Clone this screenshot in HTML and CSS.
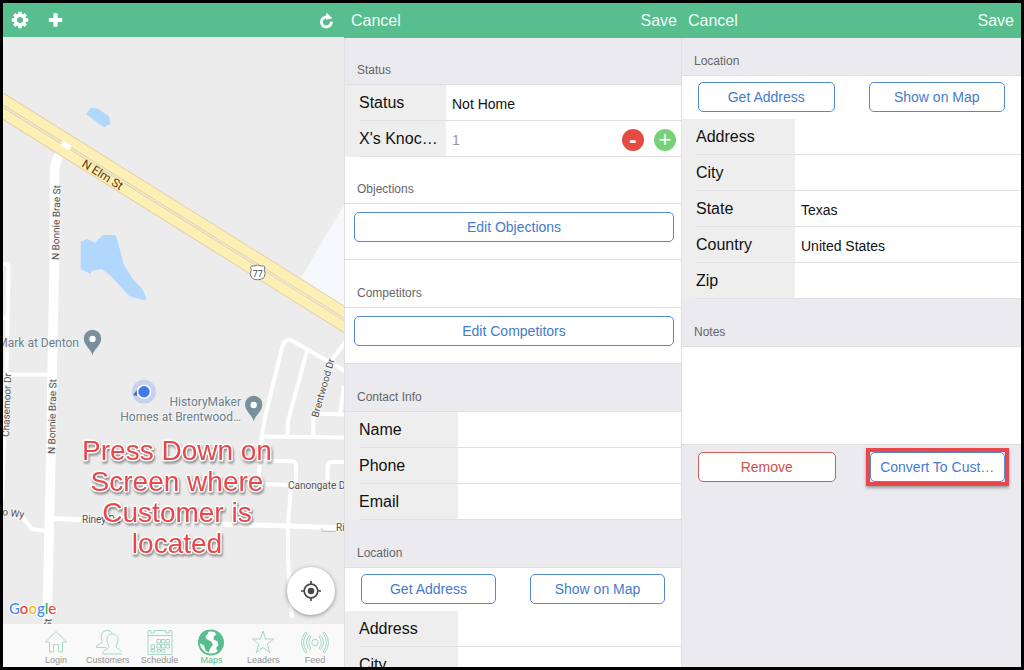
FILE: index.html
```html
<!DOCTYPE html>
<html lang="en">
<head>
<meta charset="utf-8">
<title>Customer Map</title>
<link rel="stylesheet" href="styles.css">
</head>
<body>
<main class="board">
  <section class="screen">
    <header class="bar bar-map">
      <button class="icon-btn" aria-label="Settings">
        <svg width="18" height="18" viewBox="0 0 18 18"><g fill="#fff"><path d="M7.300 .8h3.400v3.400H7.300zM7.300 13.800h3.400v3.400H7.300zM.8 7.300h3.400v3.400H.8zM13.800 7.300h3.400v3.400h-3.400z"/><path d="M7.300 .8h3.400v3.400H7.300zM7.300 13.800h3.400v3.400H7.300zM.8 7.300h3.400v3.400H.8zM13.800 7.300h3.400v3.400h-3.400z" transform="rotate(45 9 9)"/></g><circle cx="9" cy="9" r="4.700" fill="none" stroke="#fff" stroke-width="3.400"/></svg>
      </button>
      <button class="icon-btn" aria-label="Add">
        <svg width="18" height="18" viewBox="0 0 18 18"><path d="M9.500 2.300v13.400M2.800 9h13.400" stroke="#fff" stroke-width="4.200"/></svg>
      </button>
      <button class="icon-btn push" aria-label="Refresh">
        <svg width="18" height="18" viewBox="0 0 18 18"><path d="M10 6A5 5 0 1 0 14.400 10.600" fill="none" stroke="#fff" stroke-width="2.900"/><path d="M9.500 1.500l5.800 5.700-6.300 1.500z" fill="#fff"/></svg>
      </button>
    </header>
    <div class="map">
      <svg class="map-art" viewBox="3 37 341 587" preserveAspectRatio="xMidYMid slice" role="img" aria-label="Map">
        <path d="M345 203L301 278l44 30z" fill="#f6f8fb"/>
        <g fill="#b1d7fc">
          <path d="M86 114l5-6.500 6 .8 12 8 1 7.700-6 3.300z"/>
          <path d="M80.700 241.700l6.600-2.700 7.700 3.700 7.700-7.700H115l2.300 5 6.700 25 9.300 15 8.400 8 4.300 8.700-.7 4-16-4.700L110 275l-8.300-5.700-10 1.400-1 3.300-10-4.700z"/>
        </g>
        <g fill="none" stroke="#fff" stroke-linejoin="round">
          <g stroke-width="4">
            <path d="M2 264h4q2.500 0 2.500 4L6.500 374l-2 62L2 500M2 318h5M7 374.500h44"/>
            <path d="M21 515l10.700 14 17 2.500"/>
            <path d="M258.500 486v-6l3.200-43 3.300-20 17.500-71q2-7 8.500-6l54 31"/>
            <path d="M307 351l-19 70-.7 15M346 341l-14 19M313.300 413v24M313.300 413.500l32 1M340 413l4-27"/>
            <path d="M262 436.500l83 1M261 460.500l31 .8q4 0 4 4V484M345 462h-13q-4.500 0-4.500 5v17M257 484l36 1"/>
            <path d="M291 485l-3 41v35l4 57"/>
          </g>
          <path d="M53 518.500l77 3.500 160 4 56 2" stroke-width="5"/>
          <path d="M60.500 153q-6 8-6 21l-.2 90L52 380l-1 70-4 176" stroke-width="9.500"/>
        </g>
        <path d="M322 528v3.500h14" fill="none" stroke="#b8cfb8"/>
        <path d="M-2 103l352 220" stroke="#e5d0a5" stroke-width="23.500"/>
        <path d="M-2 103l352 220" stroke="#fdf0b4" stroke-width="21.500"/>
        <path d="M-2 103l352 220" stroke="#dfcda6" stroke-width="3"/>
        <path d="M-2 103l352 220" stroke="#f1e9d7" stroke-width="1.500"/>
        <path d="M62 143l8.500 5" stroke="#fff" stroke-width="5"/>
        <path d="M250.500 267q1-1.500 3.500-1l3.500-1 4 1q2.500-.5 3.500 1l-.8 3 1 3.500-1.200 4q-2 2-6.500 2.300-4.500-.3-6-2.300l-1.300-4 1.200-3.500z" fill="#fff" stroke="#777"/>
        <text class="shield" x="257.800" y="277">77</text>
        <g class="street">
          <text class="elm" transform="translate(81 166) rotate(32)">N Elm St</text>
          <text transform="translate(59 260) rotate(-89)">N Bonnie Brae St</text>
          <text transform="translate(55 454) rotate(-89)">N Bonnie Brae St</text>
          <text transform="translate(9 437) rotate(-88)">Chasemoor Dr</text>
          <text transform="translate(318 418) rotate(-74)">Brentwood Dr</text>
          <text x="288" y="489">Canongate Dr</text>
          <text x="82" y="523">Riney Rd</text>
          <text x="336" y="531">Riney Rd</text>
          <text transform="translate(2 515) rotate(8)">o Wy</text>
          <text transform="translate(51 628) rotate(-88)">St</text>
        </g>
        <g class="place">
          <text x="79" y="347" text-anchor="end">Mark at Denton</text>
          <text x="241" y="406" text-anchor="end">HistoryMaker</text>
          <text x="241" y="421" text-anchor="end">Homes at Brentwood…</text>
        </g>
        <g fill="#78909c">
          <path d="M92.500 355.500c-1-6-8.700-10-8.700-17a8.700 8.700 0 0 1 17.400 0c0 7-7.700 11-8.700 17z"/>
          <path d="M253.700 421.500c-1-6-8.700-10-8.700-17a8.700 8.700 0 0 1 17.400 0c0 7-7.700 11-8.700 17z"/>
        </g>
        <g fill="#fff"><circle cx="92.500" cy="339" r="3.200"/><circle cx="253.700" cy="405" r="3.200"/></g>
        <circle cx="144" cy="391.700" r="12" fill="#c6d1ee"/>
        <path d="M137 390l-4 5 4 1z" fill="#4a6fb8"/>
        <circle cx="144" cy="391.700" r="7.200" fill="#fff"/>
        <circle cx="144" cy="391.700" r="5.700" fill="#4479e4"/>
        <text class="google" x="9" y="614"><tspan fill="#4285f4">G</tspan><tspan fill="#ea4335">o</tspan><tspan fill="#fbbc05">o</tspan><tspan fill="#4285f4">g</tspan><tspan fill="#34a853">l</tspan><tspan fill="#ea4335">e</tspan></text>
        <g class="callout">
          <text x="177" y="460">Press Down on</text>
          <text x="177" y="491">Screen where</text>
          <text x="177" y="522">Customer is</text>
          <text x="177" y="553">located</text>
        </g>
      </svg>
      <button class="locate" aria-label="My location">
        <svg width="20" height="20" viewBox="0 0 20 20"><g fill="none" stroke="#4a4a4a" stroke-width="1.700"><circle cx="10" cy="10" r="6.800"/><path d="M10 0v3.500M10 16.500V20M0 10h3.500M16.500 10H20"/></g><circle cx="10" cy="10" r="3.300" fill="#4a4a4a"/></svg>
      </button>
    </div>
    <nav class="tabs">
      <a class="tab" href="#login"><svg width="28" height="28" viewBox="0 0 28 28"><path d="M14 3.500L24.500 14H20.500v10h-4v-7.500h-5V24h-4V14h-4z"/></svg>Login</a>
      <a class="tab" href="#customers"><svg width="28" height="28" viewBox="0 0 28 28"><path d="M12 19.500H2.500c0-4 5-3 6-6C6.500 11 6 3 13 2.500c3 0 4.500 1.500 5 3"/><path d="M18.500 6c-5 0-6.500 4-5 9 .5 1.300 1.500 2.500 1.500 3.500 0 3-6 2.500-6.500 7.500h20c0-5-6-4.500-6.500-7.500 0-1 1-2 1.500-3.500 1.500-5 0-9-5-9z"/></svg>Customers</a>
      <a class="tab" href="#schedule"><svg width="28" height="28" viewBox="0 0 28 28"><path d="M2 2.500h3V5h3V2.500h12V5h3V2.500h3v24H2zM2 7.500h24"/><path d="M11 11.500h3.500V15H11zM15.500 11.500H19V15h-3.500zM20 11.500h3.500V15H20zM5 17h3.500v3.500H5zM11 16.500h3.500V20H11zM15.500 16.500H19V20h-3.500zM20 16.500h3.500V20H20zM5 21.500h3.500V24H5zM11 21.500h3.500V24H11zM15.500 21.500H19V24h-3.500z"/></svg>Schedule</a>
      <a class="tab tab-on" href="#maps" aria-current="page"><svg width="28" height="28" viewBox="0 0 28 28"><circle class="sea" cx="14" cy="14.500" r="12"/><path class="land" d="M2 10c1-4 4-7 8-8l1.500 3-3 3.500 1 2.500 4.500 2.500 2 3-2.500 3.500-2 4.500-3-2-1.500-5L2.500 15z"/><path class="land" d="M16 2.500c6 1 10 6 10 11.500 0 4-2 7.500-5 9.500l-2-3.500 2.500-3-1-3.500-4-2 .5-3.500 2.500-1.500z"/></svg>Maps</a>
      <a class="tab" href="#leaders"><svg width="28" height="28" viewBox="0 0 28 28"><path d="M14 3l2.700 8h8l-6.400 5 2.400 8.500L14 19.500l-6.700 5L9.700 16l-6.400-5h8z"/></svg>Leaders</a>
      <a class="tab" href="#feed"><svg width="28" height="28" viewBox="0 0 28 28"><circle cx="14" cy="14.500" r="3.200"/><path d="M8.500 7.500q-6 7 0 14l1.500-1q-4.500-6 0-12zM19.500 7.500q6 7 0 14l-1.500-1q4.500-6 0-12zM4.500 4q-8 10.500 0 21l1.500-1q-7-9.500 0-19zM23.500 4q8 10.500 0 21l-1.500-1q7-9.500 0-19z"/></svg>Feed</a>
    </nav>
  </section>

  <section class="screen">
    <header class="bar"><button class="text-btn">Cancel</button><button class="text-btn">Save</button></header>
    <form class="form">
      <h2 class="head head-tight">Status</h2>
      <div class="card">
        <div class="row"><label class="name name-short" for="status">Status</label><input class="value" id="status" value="Not Home"></div>
        <div class="row"><label class="name name-short" for="knocks">X's Knoc…</label><div class="stepper"><input class="count" id="knocks" placeholder="1"><button type="button" class="step step-less" aria-label="Decrease">-</button><button type="button" class="step step-more" aria-label="Increase">+</button></div></div>
      </div>
      <h2 class="head head-tight head-white">Objections</h2>
      <div class="card card-action"><button type="button" class="btn">Edit Objections</button></div>
      <h2 class="head head-white">Competitors</h2>
      <div class="card card-action"><button type="button" class="btn">Edit Competitors</button></div>
      <h2 class="head">Contact Info</h2>
      <div class="card">
        <div class="row"><label class="name" for="name">Name</label><input class="value" id="name"></div>
        <div class="row"><label class="name" for="phone">Phone</label><input class="value" id="phone"></div>
        <div class="row"><label class="name" for="email">Email</label><input class="value" id="email"></div>
      </div>
      <h2 class="head">Location</h2>
      <div class="card">
        <div class="pair"><button type="button" class="btn">Get Address</button><button type="button" class="btn">Show on Map</button></div>
        <div class="row"><label class="name" for="address1">Address</label><input class="value" id="address1"></div>
        <div class="row"><label class="name" for="city1">City</label><input class="value" id="city1"></div>
      </div>
    </form>
  </section>

  <section class="screen">
    <header class="bar bar-last"><button class="text-btn">Cancel</button><button class="text-btn">Save</button></header>
    <form class="form">
      <h2 class="head head-first">Location</h2>
      <div class="card">
        <div class="pair"><button type="button" class="btn">Get Address</button><button type="button" class="btn">Show on Map</button></div>
        <div class="row"><label class="name" for="address2">Address</label><input class="value" id="address2"></div>
        <div class="row"><label class="name" for="city2">City</label><input class="value" id="city2"></div>
        <div class="row"><label class="name" for="state">State</label><input class="value" id="state" value="Texas"></div>
        <div class="row"><label class="name" for="country">Country</label><input class="value" id="country" value="United States"></div>
        <div class="row"><label class="name" for="zip">Zip</label><input class="value" id="zip"></div>
      </div>
      <h2 class="head"><label for="notes">Notes</label></h2>
      <textarea class="notes" id="notes"></textarea>
      <div class="pair pair-end"><button type="button" class="btn btn-danger">Remove</button><div class="marked"><button type="button" class="btn">Convert To Cust…</button></div></div>
    </form>
  </section>
</main>
</body>
</html>
```
FILE: styles.css
```css
* { box-sizing: border-box; }

body {
  margin: 0;
  background: #000;
  font-family: "Liberation Sans", Arial, sans-serif;
}

button, input, textarea {
  margin: 0;
  padding: 0;
  border: 0;
  border-radius: 0;
  background: none;
  font-family: inherit;
  outline: 0;
}

.board {
  display: grid;
  grid-template-columns: 341fr 337fr 340fr;
  height: 100vh;
  padding: 3px;
}

.screen {
  display: flex;
  flex-direction: column;
  min-width: 0;
  min-height: 0;
  overflow: hidden;
  background: #ebeaef;
}

.bar {
  flex: none;
  display: flex;
  align-items: center;
  justify-content: space-between;
  height: 35px;
  padding: 0 4px 0 7px;
  background: #57be8f;
}

.bar-last { padding-right: 7px; }

.bar-map {
  justify-content: flex-start;
  gap: 17px;
  height: 34px;
  padding: 0 9px 0 8px;
}

.icon-btn { display: flex; }
.push { margin-left: auto; }

.text-btn {
  color: #f2fbf6;
  font-size: 16px;
  line-height: 20px;
}

/* Map */
.map {
  position: relative;
  flex: 1;
  min-height: 0;
  background: #ececec;
}

.map-art {
  display: block;
  width: 100%;
  height: 100%;
}

.map-art text { font-family: Roboto, sans-serif; }

.street {
  fill: #555;
  stroke: #f4f4f4;
  stroke-width: 2px;
  paint-order: stroke;
  font-size: 10px;
}

.street .elm {
  fill: #5b4022;
  stroke: #fdf0b4;
  font-size: 12px;
}

.place {
  fill: #6a7f8c;
  stroke: #f4f4f4;
  stroke-width: 2px;
  paint-order: stroke;
  font-size: 12px;
}

.shield {
  fill: #444;
  font-size: 9px;
  text-anchor: middle;
}

.map-art .google {
  stroke: #fff;
  stroke-width: 2px;
  paint-order: stroke;
  font-family: Lato, sans-serif;
  font-size: 15px;
  font-weight: 500;
}

.map-art .callout text { font-family: "Liberation Sans", Arial, sans-serif; }

.callout {
  fill: #e8474b;
  stroke: #fff;
  stroke-width: 3px;
  stroke-linejoin: round;
  paint-order: stroke;
  font-size: 28px;
  text-anchor: middle;
  filter: drop-shadow(1px 2px 1px #0006);
}

.locate {
  position: absolute;
  right: 9px;
  bottom: 9px;
  display: flex;
  align-items: center;
  justify-content: center;
  width: 48px;
  height: 48px;
  border-radius: 50%;
  background: #fff;
  box-shadow: 0 1px 4px #0006;
}

.tabs {
  flex: none;
  display: flex;
  height: 43px;
  padding: 4px 3px 0 27px;
  background: #f9f9f9;
}

.tab {
  flex: 1;
  display: flex;
  flex-direction: column;
  align-items: center;
  color: #929292;
  font-size: 9px;
  line-height: 9px;
  text-decoration: none;
}

.tab svg {
  fill: none;
  stroke: #a5d9c1;
  stroke-width: 1px;
}

.tab-on { color: #57be8f; }
.tab .sea { fill: #fff; stroke: #57be8f; stroke-width: 2px; }
.tab .land { fill: #57be8f; stroke: none; }

/* Forms */
.form {
  flex: 1;
  min-height: 0;
  overflow: hidden;
  border-left: 1px solid #e0e0e3;
}

.head {
  margin: 0;
  padding: 25px 12px 6px;
  color: #666;
  font-size: 12px;
  font-weight: 400;
  line-height: 16px;
}

.head-tight { padding-top: 24px; }
.head-first { padding-top: 15px; }
.head-white { background: #fff; }

.card {
  border-top: 1px solid #dedee1;
  background: #fff;
}

.card-action {
  display: flex;
  padding: 8px 7px 17px 9px;
  border-bottom: 1px solid #dedee1;
}

.row {
  display: flex;
  height: 36px;
  padding-left: 14px;
  background: #eee;
}

.name {
  flex: 0 0 99px;
  overflow: hidden;
  border-bottom: 1px solid #e0e0e0;
  color: #111;
  font-size: 16px;
  line-height: 36px;
  white-space: nowrap;
}

.name-short { flex-basis: 87px; }

.value, .stepper {
  flex: 1;
  min-width: 0;
  padding-left: 6px;
  border-bottom: 1px solid #e0e0e0;
  background: #fff;
  color: #111;
  font-size: 14px;
}

.value { padding-top: 2px; }

.stepper {
  display: flex;
  align-items: center;
  gap: 10px;
  padding-top: 2px;
  padding-right: 5px;
}

.count {
  flex: 1;
  min-width: 0;
  font-size: 14px;
}

.count::placeholder { color: #999; }

.step {
  display: flex;
  align-items: center;
  justify-content: center;
  width: 22px;
  height: 22px;
  border-radius: 50%;
  color: #fff;
  font-size: 22px;
  line-height: 22px;
}

.step-less { background: #e34b43; font-weight: 700; }
.step-more { background: #78d07a; }

.btn {
  flex: 1;
  min-width: 0;
  height: 30px;
  border: 1px solid #5289d3;
  border-radius: 5px;
  background: #fff;
  color: #447bcc;
  font-size: 14px;
}

.btn-danger {
  border-color: #cf5d57;
  color: #cf5148;
}

.marked {
  flex: 1;
  display: flex;
  min-width: 0;
  outline: 4px solid #e8474b;
  box-shadow: 0 2px 3px 4px #0005;
  background: #ebeaef;
}

.pair {
  display: flex;
  gap: 34px;
  padding: 6px 16px 7px;
}

.pair-end { padding-top: 7px; }

.notes {
  display: block;
  width: 100%;
  height: 99px;
  border-top: 1px solid #dedee1;
  border-bottom: 1px solid #dedee1;
  background: #fff;
  resize: none;
}
```
